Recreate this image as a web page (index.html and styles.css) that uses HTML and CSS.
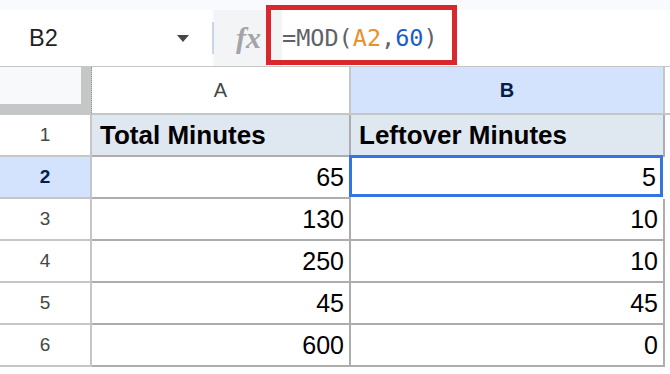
FILE: index.html
```html
<!DOCTYPE html>
<html lang="en">
    <head>
        <title>MOD formula</title>
        <meta charset="utf-8">
        <link rel="stylesheet" href="styles.css">
    </head>
    <body>
        <div class="toolbar">
            <div class="namebox">
                <span class="ref">B2</span>
                <span class="caret"></span>
            </div>
            <div class="divider"></div>
            <div class="fx">fx</div>
            <div class="formula"><span class="fn">=MOD(</span><span class="cellref">A2</span><span class="fn">,</span><span class="num">60</span><span class="fn">)</span></div>
            <div class="highlight"></div>
        </div>

        <div class="grid">
            <div class="row head">
                <div class="cell corner"><div class="corner-box"></div></div>
                <div class="cell colhead col-a">A</div>
                <div class="cell colhead col-b active">B</div>
                <div class="cell fill"></div>
            </div>
            <div class="row">
                <div class="cell rowhead">1</div>
                <div class="cell data col-a title">Total Minutes</div>
                <div class="cell data col-b title">Leftover Minutes</div>
            </div>
            <div class="row">
                <div class="cell rowhead active">2</div>
                <div class="cell data col-a">65</div>
                <div class="cell data col-b selected">5</div>
            </div>
            <div class="row">
                <div class="cell rowhead">3</div>
                <div class="cell data col-a">130</div>
                <div class="cell data col-b">10</div>
            </div>
            <div class="row">
                <div class="cell rowhead">4</div>
                <div class="cell data col-a">250</div>
                <div class="cell data col-b">10</div>
            </div>
            <div class="row">
                <div class="cell rowhead">5</div>
                <div class="cell data col-a">45</div>
                <div class="cell data col-b">45</div>
            </div>
            <div class="row">
                <div class="cell rowhead">6</div>
                <div class="cell data col-a">600</div>
                <div class="cell data col-b">0</div>
            </div>
        </div>
    </body>
</html>
```

FILE: styles.css
```css
* {
    box-sizing: border-box;
}
body {
    margin: 0;
    background: #fff;
    font-family: "Liberation Sans", Arial, sans-serif;
    color: #000;
}

/* formula bar */
.toolbar {
    position: relative;
    display: flex;
    height: 66px;
    padding-top: 10px;
    background: #f8fafd;
}
.namebox {
    display: flex;
    align-items: center;
    width: 212px;
    padding-left: 29px;
    background: #fff;
}
.ref {
    font-size: 23.5px;
    color: #1f1f1f;
}
.caret {
    margin-left: auto;
    margin-right: 23px;
    border-left: 6.5px solid transparent;
    border-right: 6.5px solid transparent;
    border-top: 7px solid #444746;
}
.divider {
    align-self: center;
    width: 2px;
    height: 32px;
    background: #c9d6e8;
}
.fx {
    display: flex;
    align-items: center;
    width: 68px;
    padding-left: 22px;
    background: #f3f4f6;
    font: italic bold 30px "Liberation Serif", serif;
    color: #a2a4a6;
}
.formula {
    flex: 1;
    display: flex;
    align-items: center;
    background: #fff;
    font: 23.5px "DejaVu Sans Mono", monospace;
    color: #5f6368;
}
.cellref {
    color: #e8912d;
}
.num {
    color: #1a5dc8;
}
.highlight {
    position: absolute;
    left: 266px;
    top: 5px;
    width: 191px;
    height: 60px;
    border: 5px solid #d9272e;
}

/* sheet */
.grid {
    border-top: 1px solid #c4c7c5;
}
.row {
    display: flex;
    height: 42px;
}
.row.head {
    height: 48px;
}
.cell {
    display: flex;
    align-items: center;
    border-right: 2px solid #adadad;
    border-bottom: 2px solid #adadad;
}
.corner {
    width: 92px;
    padding: 0 10px 9px 0;
    background: #c4c7c5;
    border-right: 1px dotted #8f9296;
    border-bottom: 2px solid #c4c7c5;
}
.corner-box {
    width: 100%;
    height: 100%;
    background: #f8f9fa;
}
.col-a {
    width: 259px;
}
.col-b {
    width: 314px;
}
.colhead {
    justify-content: center;
    font-size: 20px;
    color: #444746;
    border-color: #c4c7c5;
}
.colhead.active {
    background: #d3e3fd;
    color: #041e49;
    font-weight: bold;
}
.fill {
    flex: 1;
    border-right: none;
    border-color: #c4c7c5;
}
.rowhead {
    width: 92px;
    justify-content: center;
    font-size: 19px;
    color: #444746;
    border-color: #c4c7c5;
}
.rowhead.active {
    background: #d3e3fd;
    color: #041e49;
    font-weight: bold;
}
.data {
    justify-content: flex-end;
    padding-right: 5px;
    font-size: 25px;
}
.title {
    justify-content: flex-start;
    padding-left: 8px;
    background: #dfe7f0;
    font-size: 26px;
    font-weight: bold;
}
.selected {
    box-shadow: inset 0 0 0 3px #3574e3;
    margin: -2px 0 0 -2px;
    width: 316px;
    height: 44px;
    border-color: transparent;
    padding-right: 7px;
    padding-top: 2px;
}
```
